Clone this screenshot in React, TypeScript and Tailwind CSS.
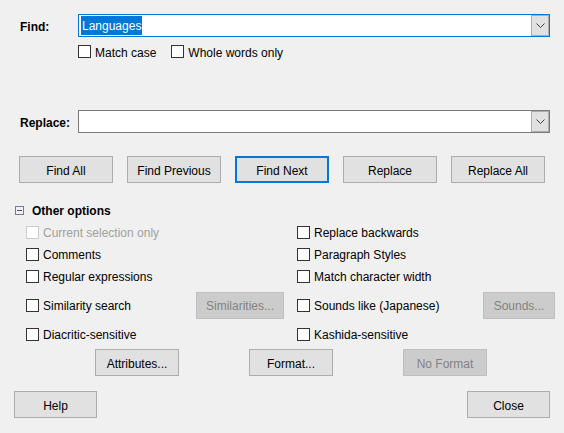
import React from 'react'

const FONT = { fontFamily: '"Liberation Sans", Arial, sans-serif' }

function Check({ label, disabled = false }: { label: string; disabled?: boolean }) {
  return (
    <div className="flex items-center gap-[4px]">
      <span
        className={`w-[13px] h-[13px] border bg-white shrink-0 ${
          disabled ? 'border-[#cccccc]' : 'border-[#333333]'
        }`}
      />
      <span className={`pt-[2px] ${disabled ? 'text-[#a0a0a0]' : 'text-black'}`}>{label}</span>
    </div>
  )
}

function Btn({
  label,
  w = 'w-[94px]',
  disabled = false,
  focused = false,
}: {
  label: string
  w?: string
  disabled?: boolean
  focused?: boolean
}) {
  return (
    <div
      className={`${w} h-[27px] shrink-0 flex items-center justify-center ${
        disabled
          ? 'bg-[#cccccc] border border-[#bfbfbf] text-[#838383]'
          : focused
            ? 'bg-[#e1e1e1] border-2 border-[#0078d7] text-black'
            : 'bg-[#e1e1e1] border border-[#adadad] text-black'
      }`}
    >
      <span className="pt-[2px]">{label}</span>
    </div>
  )
}

function Combo({ focused = false, children }: { focused?: boolean; children?: React.ReactNode }) {
  return (
    <div
      className={`w-[472px] h-[23px] bg-white border flex items-stretch ${
        focused ? 'border-[#0078d7]' : 'border-[#7a7a7a]'
      }`}
    >
      <div className="flex-1 flex items-center pl-[2px]">{children}</div>
      <div className="w-[18px] bg-[#e1e1e1] border border-[#adadad] flex items-center justify-center">
        <svg width="9" height="5" viewBox="0 0 9 5">
          <path d="M0.5 0.5 L4.5 4.5 L8.5 0.5" fill="none" stroke="#404040" strokeWidth="1" />
        </svg>
      </div>
    </div>
  )
}

export default function App() {
  return (
    <div className="w-[564px] h-[433px] bg-[#f0f0f0] text-[12px] text-black overflow-hidden" style={FONT}>
      {/* Find */}
      <div className="flex items-center pt-[14px] pl-[20px]">
        <span className="w-[58px] font-bold pt-[2px]">Find:</span>
        <Combo focused>
          <span className="bg-[#0078d7] text-white px-[1px] pt-[1px] leading-[18px]">Languages</span>
        </Combo>
      </div>
      <div className="flex items-center gap-[15px] pl-[78px] mt-[8px] h-[13px]">
        <Check label="Match case" />
        <Check label="Whole words only" />
      </div>

      {/* Replace */}
      <div className="flex items-center mt-[52px] pl-[20px]">
        <span className="w-[58px] font-bold pt-[2px]">Replace:</span>
        <Combo />
      </div>

      {/* Main buttons */}
      <div className="flex gap-[14px] pl-[19px] mt-[23px]">
        <Btn label="Find All" />
        <Btn label="Find Previous" />
        <Btn label="Find Next" focused />
        <Btn label="Replace" />
        <Btn label="Replace All" />
      </div>

      {/* Other options */}
      <div className="flex items-center h-[22px] mt-[16px] pl-[15px] gap-[8px]">
        <span className="w-[9px] h-[9px] border border-[#6b7f99] flex items-center justify-center">
          <span className="w-[5px] h-[1px] bg-[#3a5a85]" />
        </span>
        <span className="font-bold pt-[2px]">Other options</span>
      </div>

      <div className="grid grid-cols-[271px_258px] pl-[26px]">
        <div className="h-[22px] flex items-center">
          <Check label="Current selection only" disabled />
        </div>
        <div className="h-[22px] flex items-center">
          <Check label="Replace backwards" />
        </div>
        <div className="h-[22px] flex items-center">
          <Check label="Comments" />
        </div>
        <div className="h-[22px] flex items-center">
          <Check label="Paragraph Styles" />
        </div>
        <div className="h-[22px] flex items-center">
          <Check label="Regular expressions" />
        </div>
        <div className="h-[22px] flex items-center">
          <Check label="Match character width" />
        </div>
        <div className="h-[36px] flex items-center justify-between pr-[13px]">
          <Check label="Similarity search" />
          <Btn label="Similarities..." w="w-[88px]" disabled />
        </div>
        <div className="h-[36px] flex items-center justify-between">
          <Check label="Sounds like (Japanese)" />
          <Btn label="Sounds..." w="w-[72px]" disabled />
        </div>
        <div className="h-[22px] flex items-center">
          <Check label="Diacritic-sensitive" />
        </div>
        <div className="h-[22px] flex items-center">
          <Check label="Kashida-sensitive" />
        </div>
      </div>

      {/* Attribute buttons */}
      <div className="flex gap-[70px] pl-[95px] mt-[4px]">
        <Btn label="Attributes..." w="w-[84px]" />
        <Btn label="Format..." w="w-[84px]" />
        <Btn label="No Format" w="w-[84px]" disabled />
      </div>

      {/* Bottom */}
      <div className="flex justify-between pl-[14px] pr-[14px] mt-[15px]">
        <Btn label="Help" w="w-[83px]" />
        <Btn label="Close" w="w-[83px]" />
      </div>
    </div>
  )
}
